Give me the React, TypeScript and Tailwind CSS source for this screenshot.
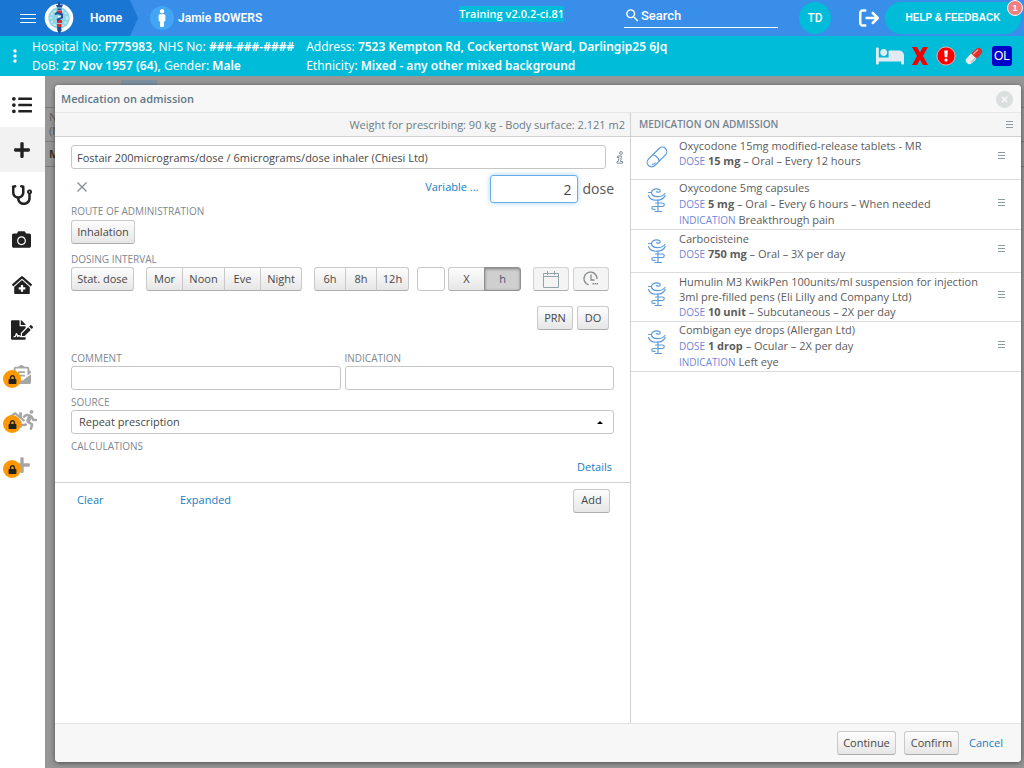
import React, { useState } from 'react';
import {
  FaBed,
  FaCamera,
  FaClinicMedical,
  FaEnvelopeOpenText,
  FaFileSignature,
  FaHome,
  FaListUl,
  FaLock,
  FaMale,
  FaPlus,
  FaRunning,
  FaStethoscope,
} from 'react-icons/fa';
import { FaArrowRightFromBracket, FaCircleXmark } from 'react-icons/fa6';
import { MdMoreVert, MdSearch } from 'react-icons/md';

type Medication = {
  name: string;
  dose: string;
  details: string;
  indication?: string;
  icon: 'pill' | 'bowl';
};

const medications: Medication[] = [
  {
    name: 'Oxycodone 15mg modified-release tablets - MR',
    dose: '15 mg',
    details: 'Oral – Every 12 hours',
    icon: 'pill',
  },
  {
    name: 'Oxycodone 5mg capsules',
    dose: '5 mg',
    details: 'Oral – Every 6 hours – When needed',
    indication: 'Breakthrough pain',
    icon: 'bowl',
  },
  { name: 'Carbocisteine', dose: '750 mg', details: 'Oral – 3X per day', icon: 'bowl' },
  {
    name: 'Humulin M3 KwikPen 100units/ml suspension for injection 3ml pre-filled pens (Eli Lilly and Company Ltd)',
    dose: '10 unit',
    details: 'Subcutaneous – 2X per day',
    icon: 'bowl',
  },
  {
    name: 'Combigan eye drops (Allergan Ltd)',
    dose: '1 drop',
    details: 'Ocular – 2X per day',
    indication: 'Left eye',
    icon: 'bowl',
  },
];

const buttonStyle =
  'h-6 whitespace-nowrap border border-[#c9c9c9] border-b-[#adadad] bg-linear-to-b from-[#fdfdfd] to-[#e6e6e6] text-[#474747]';
const inputStyle =
  'h-6 min-w-0 rounded-[3px] border border-[#c6c6c6] bg-white px-[5px] text-[#474747] outline-none';
const labelStyle = 'block text-[10px] leading-[14px] text-[#7d8792]';
const linkStyle = 'text-[#197dc1]';

function Logo() {
  return (
    <svg viewBox="0 0 30 32" className="h-8 w-[30px]">
      <circle cx="15" cy="16" r="12.5" fill="#8fd5e4" stroke="#fff" strokeWidth="3.6" />
      <circle cx="15" cy="16" r="8" fill="none" stroke="#d5f0f6" strokeWidth="1.5" strokeDasharray="2 2" />
      <path d="M12 3h2V0h2v2.500h3l-1 3h-5z" fill="#1d4f9c" />
      <path d="M13 24.500h4l.6 4-2.300 3.500-2-3.500z" fill="#1d4f9c" />
      <path d="M13 8.500h5V12h-5zM13 18h5v3h-5zM13 22h4.500v3H13z" fill="#e02b31" />
      <path
        d="M11 12.500l2-1.500 5 1.500v3l-5 2.500"
        fill="none"
        stroke="#1d4f9c"
        strokeWidth="2"
      />
      <path d="M13.500 6.500h4v1.500h-4z" fill="#1d4f9c" />
      <path d="M14 14h2.500v1.500H14z" fill="#fff" />
    </svg>
  );
}

function Capsule() {
  return (
    <svg viewBox="0 0 22 22" className="size-5">
      <g transform="rotate(-45 11 11)">
        <rect x="0" y="7" width="12" height="8" rx="4" fill="#ececec" />
        <rect x="10" y="7" width="12" height="8" rx="4" fill="#e22f2a" />
        <path d="M7 7h4v8H7z" fill="#ececec" />
        <path d="M11 7h4v8h-4z" fill="#e22f2a" />
        <path d="M12.500 9h6" stroke="#f6a19d" strokeWidth="1.500" strokeLinecap="round" />
        <path d="M3.500 13.700H11" stroke="#bfbfc4" strokeWidth="1.500" />
      </g>
    </svg>
  );
}

function PillIcon() {
  return (
    <svg viewBox="0 0 22 22" className="h-[22px] w-[22px]" fill="none" stroke="#5b9bdc" strokeWidth="1.200">
      <g transform="rotate(-45 11 11)">
        <rect x="-1" y="6.500" width="24" height="9" rx="4.500" />
        <path d="M9.500 6.500c2 2.500 2 6.500 0 9M2 12.800c1 1 2 1.200 4 1.200" />
      </g>
    </svg>
  );
}

function BowlIcon() {
  return (
    <svg
      viewBox="0 0 20 25"
      className="h-[25px] w-5"
      fill="none"
      stroke="#5b9bdc"
      strokeWidth="1.200"
      strokeLinecap="round"
    >
      <path d="M1.500 4.500h2.700c.8 2.800 3 4.300 6.300 4.200 3.500 0 6-1.200 7.500-3.200" />
      <path d="M4.300 4.500c.7-2 2.700-3.700 5.200-3.700 2.300 0 4 1 3.600 2.400-.4 1.200-2.300 1.300-3.600.5" />
      <path d="M1.500 7.500c1 3.200 4.200 5 8.500 4.700 4-.2 7-1.800 8.200-4.700M11 12.300v10.500M8 23.500h6.500" />
      <path d="M8.500 15h6.800c2.600 0 2.600 3.500 0 3.500H6.500c-2.300 0-2.300 2.900 0 2.900h1.500" />
    </svg>
  );
}

function RowMenu({ label }: { label: string }) {
  return (
    <button type="button" aria-label={label} className="flex h-4 w-3 items-center justify-center">
      <svg viewBox="0 0 7 9" className="h-[9px] w-[7px]">
        <path d="M0 1.500h7M0 4.500h7M0 7.500h7" stroke="#8b9da3" strokeWidth="1" />
      </svg>
    </button>
  );
}

function TopBar() {
  return (
    <header className="flex h-9 items-center bg-[#388ee8] text-xs font-semibold text-white">
      <div className="relative flex h-9 w-[130px] shrink-0 items-center bg-[#1976d2] pl-5">
        <button type="button" aria-label="Menu">
          <svg viewBox="0 0 16 11" className="h-[11px] w-4">
            <path d="M0 1.500h16M0 5.500h16M0 9.500h16" stroke="#fff" strokeWidth="1" />
          </svg>
        </button>
        <span className="ml-2 mr-4">
          <Logo />
        </span>
        <a href="#home" className="font-['Roboto']">
          Home
        </a>
        <svg viewBox="0 0 8 36" className="absolute left-full top-0 h-9 w-2">
          <path d="M0 0l8 18-8 18z" fill="#1976d2" />
        </svg>
      </div>
      <a href="#patient" className="ml-5 flex shrink-0 items-center gap-1">
        <span className="flex size-6 items-center justify-center rounded-full bg-[#42a5f5]">
          <FaMale size={18} />
        </span>
        <span className="font-['Roboto']">Jamie BOWERS</span>
      </a>
      <div className="flex-1" />
      <span className="mb-2 shrink-0 bg-[#00bcd8] text-[11px] leading-4">Training v2.0.2-ci.81</span>
      <label className="mb-2 ml-15 flex h-7 w-[154px] shrink-0 items-center border-b border-white pt-1">
        <MdSearch size={19} />
        <input
          type="text"
          aria-label="Search"
          placeholder="Search"
          className="w-full min-w-0 bg-transparent font-['Roboto'] text-[13px] font-medium outline-none placeholder:text-white"
        />
      </label>
      <button
        type="button"
        className="ml-[21px] size-8 shrink-0 rounded-full bg-[#00bcd8] font-['Roboto'] font-medium"
      >
        TD
      </button>
      <button type="button" aria-label="Sign out" className="ml-7 shrink-0">
        <FaArrowRightFromBracket size={20} />
      </button>
      <button
        type="button"
        className="relative ml-1.5 mr-[3px] h-8 w-[136px] shrink-0 rounded-full bg-[#00bcd8] font-['Liberation_Sans'] text-[10px] font-bold"
      >
        HELP &amp; FEEDBACK
        <span className="absolute -right-0.5 -top-0.5 flex size-4 items-center justify-center rounded-full border border-white bg-[#f08080] text-[9px]">
          1
        </span>
      </button>
    </header>
  );
}

function PatientBar() {
  return (
    <div className="flex h-10 items-center bg-[#00bcd8] font-['Noto_Sans',sans-serif] text-xs leading-[19px] text-white">
      <button type="button" aria-label="Patient options" className="flex w-8 shrink-0 pl-[5px]">
        <MdMoreVert size={20} />
      </button>
      <div className="mr-3 whitespace-nowrap">
        <p>
          Hospital No: <b className="font-semibold">F775983,</b> NHS No:{' '}
          <b className="font-semibold">###-###-####</b>
        </p>
        <p>
          DoB: <b className="font-semibold">27 Nov 1957 (64),</b> Gender: <b className="font-semibold">Male</b>
        </p>
      </div>
      <div className="flex-1 whitespace-nowrap">
        <p>
          Address: <b className="font-semibold">7523 Kempton Rd, Cockertonst Ward, Darlingip25 6Jq</b>
        </p>
        <p>
          Ethnicity: <b className="font-semibold">Mixed - any other mixed background</b>
        </p>
      </div>
      <div className="flex items-center gap-2 pr-3">
        <FaBed size={28} className="text-[#e2ebf2]" />
        <svg viewBox="0 0 16 18" className="h-[18px] w-4">
          <path d="M0 0h5l3 5.500L11 0h5l-5 9 5 9h-5l-3-5.500L5 18H0l5-9z" fill="#f00000" />
        </svg>
        <svg viewBox="0 0 22 22" className="size-5">
          <circle cx="11" cy="11" r="10" fill="#f00" stroke="#f7b5b5" strokeWidth="1" />
          <path d="M9 5h4l-.6 7.500H9.600z" fill="#fff" />
          <circle cx="11" cy="15.500" r="1.700" fill="#fff" />
        </svg>
        <Capsule />
        <span className="flex size-5 items-center justify-center rounded-[3px] bg-[#0000c8] font-['Liberation_Sans'] text-xs">
          OL
        </span>
      </div>
    </div>
  );
}

function LockBadge() {
  return (
    <span className="absolute left-[3px] top-[18px] flex size-[18px] items-center justify-center rounded-full bg-[#ff9800] text-[#212121]">
      <FaLock size={9} />
    </span>
  );
}

function Sidebar() {
  const item = 'relative flex h-[45px] w-full items-center justify-center pr-0.5 text-[#212121]';
  return (
    <nav className="w-[45px] shrink-0 bg-white pt-1.5">
      <button type="button" aria-label="List" className={item}>
        <FaListUl size={20} />
      </button>
      <button type="button" aria-label="Add" className={`${item} bg-[#f2f2f2]`}>
        <FaPlus size={18} />
      </button>
      <button type="button" aria-label="Examination" className={item}>
        <FaStethoscope size={20} />
      </button>
      <button type="button" aria-label="Photos" className={item}>
        <FaCamera size={19} />
      </button>
      <button type="button" aria-label="Clinic" className={item}>
        <FaClinicMedical size={20} />
      </button>
      <button type="button" aria-label="Sign" className={item}>
        <FaFileSignature size={22} />
      </button>
      <button type="button" aria-label="Letters, locked" className={item}>
        <FaEnvelopeOpenText size={19} className="text-[#a6a6a6]" />
        <LockBadge />
      </button>
      <button type="button" aria-label="Discharge, locked" className={item}>
        <span className="flex items-center text-[#a6a6a6]">
          <FaHome size={20} className="-mr-1.5" />
          <FaRunning size={20} />
        </span>
        <LockBadge />
      </button>
      <button type="button" aria-label="Add, locked" className={item}>
        <FaPlus size={18} className="text-[#a6a6a6]" />
        <LockBadge />
      </button>
    </nav>
  );
}

// page that stays dimmed behind the dialog
function Backdrop() {
  return (
    <div aria-hidden="true" className="absolute inset-0 overflow-hidden bg-[#969696] text-[11px] text-[#5c5c5c]">
      <div className="flex h-8 items-start border-b border-[#7a7a7a] pl-[76px] pt-1">
        <span className="h-5 w-9 bg-[#7c91a0]" />
      </div>
      <div className="h-[34px] overflow-hidden border-b border-[#7a7a7a] pl-1 pt-0.5 leading-[14px]">
        <p>N</p>
        <p>(N</p>
      </div>
      <div className="h-[25px] border-b border-[#7a7a7a] pl-1 font-bold leading-6 text-[#333]">M</div>
    </div>
  );
}

function PrescriptionForm() {
  const [dose, setDose] = useState('2');
  const [drug, setDrug] = useState('Fostair 200micrograms/dose / 6micrograms/dose inhaler (Chiesi Ltd)');
  const [unit, setUnit] = useState('h');

  return (
    <form>
      <div className="px-4 pb-1.5 pt-2">
        <div className="flex items-center gap-2">
          <input
            type="text"
            aria-label="Medication"
            value={drug}
            onChange={(e) => setDrug(e.target.value)}
            className={`${inputStyle} flex-1`}
          />
          <button type="button" aria-label="Information" className="-mr-3 flex w-3 justify-center">
            <svg viewBox="0 0 8 13" className="h-[13px] w-2" fill="none" stroke="#7f9198" strokeWidth="1">
              <circle cx="5" cy="2" r="1.400" />
              <path d="M1.500 5h4l-1 5.500H6.500v1.700H1v-1.700h1.200l.8-4H1.200z" />
            </svg>
          </button>
        </div>

        <div className="mt-1.5 flex items-center">
          <button type="button" aria-label="Remove" className="ml-1.5 mb-1">
            <svg viewBox="0 0 10 10" className="size-2.5">
              <path d="M.5.5l9 9M9.500.5l-9 9" stroke="#7c8b91" strokeWidth="1.200" />
            </svg>
          </button>
          <a href="#variable" className={`${linkStyle} ml-auto mb-1 mr-3`}>
            Variable ...
          </a>
          <input
            id="dose"
            type="text"
            value={dose}
            onChange={(e) => setDose(e.target.value)}
            className="h-7 w-[88px] rounded-[3px] border border-[#66afe9] px-1.5 text-right text-sm text-[#474747] shadow-[0_0_5px_rgba(102,175,233,0.6)] outline-none"
          />
          <label htmlFor="dose" className="ml-1 text-sm leading-4 text-[#555]">
            dose
          </label>
        </div>

        <p className={`${labelStyle} mt-px`}>ROUTE OF ADMINISTRATION</p>
        <button type="button" className={`${buttonStyle} mt-0.5 w-16 rounded-[3px] from-[#ededed]`}>
          Inhalation
        </button>

        <p className={`${labelStyle} mt-2`}>DOSING INTERVAL</p>
        <div className="mt-px flex">
          <button type="button" className={`${buttonStyle} mr-3 w-[63px] rounded-[3px]`}>
            Stat. dose
          </button>
          <button type="button" className={`${buttonStyle} w-[37px] rounded-l-[3px]`}>
            Mor
          </button>
          <button type="button" className={`${buttonStyle} -ml-px w-[43px]`}>
            Noon
          </button>
          <button type="button" className={`${buttonStyle} -ml-px w-[37px]`}>
            Eve
          </button>
          <button type="button" className={`${buttonStyle} -ml-px mr-3 w-[42px] rounded-r-[3px]`}>
            Night
          </button>
          <button type="button" className={`${buttonStyle} w-8 rounded-l-[3px]`}>
            6h
          </button>
          <button type="button" className={`${buttonStyle} -ml-px w-8`}>
            8h
          </button>
          <button type="button" className={`${buttonStyle} -ml-px mr-2 w-[33px] rounded-r-[3px]`}>
            12h
          </button>
          <input type="text" aria-label="Interval" className={`${inputStyle} mr-[3px] w-7`} />
          <button
            type="button"
            onClick={() => setUnit('X')}
            className={
              unit === 'X'
                ? 'h-6 w-[37px] rounded-l-[3px] border border-[#8f8f8f] bg-[#cfcfcf] text-[#3f5573] shadow-[inset_0_1px_3px_rgba(0,0,0,0.4)]'
                : `${buttonStyle} w-[37px] rounded-l-[3px]`
            }
          >
            X
          </button>
          <button
            type="button"
            onClick={() => setUnit('h')}
            className={
              unit === 'h'
                ? '-ml-px h-6 w-[37px] rounded-r-[3px] border border-[#8f8f8f] bg-[#cfcfcf] text-[#3f5573] shadow-[inset_0_1px_3px_rgba(0,0,0,0.4)]'
                : `${buttonStyle} -ml-px w-[37px] rounded-r-[3px]`
            }
          >
            h
          </button>
          <button
            type="button"
            aria-label="Dates"
            className="ml-auto mr-1 flex h-6 w-9 items-center justify-center rounded-[3px] border border-[#d2d2d2] border-b-[#adadad] bg-[#f4f4f4]"
          >
            <svg viewBox="0 0 16 17" className="h-[17px] w-4" fill="none" stroke="#92a3a9" strokeWidth="1">
              <path d="M.5 2.500h15v14H.5zM.5 5.500h15M4.500 0v4M11.500 0v4" />
            </svg>
          </button>
          <button
            type="button"
            aria-label="Times"
            className="mr-[5px] flex h-6 w-9 items-center justify-center rounded-[3px] border border-[#d2d2d2] border-b-[#adadad] bg-[#f4f4f4]"
          >
            <svg viewBox="0 0 16 16" className="size-4" fill="none" stroke="#85898b" strokeWidth="1.300">
              <path d="M5.500 13.800A6.500 6.500 0 1 1 14 8M8 3.500V9h3.500" />
              <path d="M9.500 12.700h5.500" strokeWidth="1.600" strokeDasharray="1.500 .6" />
            </svg>
          </button>
        </div>

        <div className="mr-[5px] mt-[15px] flex justify-end gap-1">
          <button type="button" className={`${buttonStyle} w-9 rounded-[3px]`}>
            PRN
          </button>
          <button type="button" className={`${buttonStyle} w-8 rounded-[3px]`}>
            DO
          </button>
        </div>

        <div className="mt-[21px] flex gap-1">
          <div className="flex-1">
            <label htmlFor="comment" className={labelStyle}>
              COMMENT
            </label>
            <input id="comment" type="text" className={`${inputStyle} mt-px w-full`} />
          </div>
          <div className="flex-1">
            <label htmlFor="indication" className={labelStyle}>
              INDICATION
            </label>
            <input id="indication" type="text" className={`${inputStyle} mt-px w-full`} />
          </div>
        </div>

        <label htmlFor="source" className={`${labelStyle} mt-[5px]`}>
          SOURCE
        </label>
        <div className="relative mt-px">
          <select id="source" className={`${inputStyle} block w-full appearance-none pl-[7px] text-[#222]`}>
            <option>Repeat prescription</option>
          </select>
          <svg viewBox="0 0 6 3" className="pointer-events-none absolute right-[11px] top-[11px] h-[3px] w-1.5">
            <path d="M0 3L3 0l3 3z" fill="#000" />
          </svg>
        </div>

        <p className={`${labelStyle} mt-[5px]`}>CALCULATIONS</p>
        <div className="mt-1.5 pr-0.5 text-right">
          <a href="#details" className={linkStyle}>
            Details
          </a>
        </div>
      </div>

      <div className="flex items-center border-t border-[#d0d0d0] pl-[22px] pr-5 pt-1.5">
        <a href="#clear" className={`${linkStyle} w-[103px]`}>
          Clear
        </a>
        <a href="#expanded" className={linkStyle}>
          Expanded
        </a>
        <button type="button" className={`${buttonStyle} ml-auto w-[37px] rounded-[3px]`}>
          Add
        </button>
      </div>
    </form>
  );
}

function MedicationRow({ med }: { med: Medication }) {
  return (
    <li
      className={`flex min-h-[43px] border-b border-[#dcdcdc] pr-3.5 ${
        med.indication ? 'pb-px leading-4' : 'pb-0.5 pt-px leading-[15px]'
      }`}
    >
      <span className="flex w-12 shrink-0 justify-center pl-1 pt-2">
        {med.icon === 'pill' ? <PillIcon /> : <BowlIcon />}
      </span>
      <div className="flex-1 text-[#5c5c5c]">
        <p>{med.name}</p>
        <p>
          <span className="text-[10px] leading-none text-[#6f86d6]">DOSE</span> <b>{med.dose}</b> – {med.details}
        </p>
        {med.indication && (
          <p>
            <span className="text-[10px] leading-none text-[#6f86d6]">INDICATION</span> {med.indication}
          </p>
        )}
      </div>
      <div className="flex items-center pb-1">
        <RowMenu label={`Options for ${med.name}`} />
      </div>
    </li>
  );
}

export default function App() {
  return (
    <div className="flex min-h-screen flex-col overflow-x-hidden font-['Open_Sans',sans-serif] text-[11px]">
      <TopBar />
      <PatientBar />
      <div className="flex flex-1">
        <Sidebar />
        <main className="relative flex min-w-0 flex-1 pb-1.5 pl-2.5 pr-[3px] pt-[9px]">
          <Backdrop />
          <section
            role="dialog"
            aria-label="Medication on admission"
            className="relative flex min-w-0 flex-1 flex-col overflow-hidden rounded-[4px] bg-white shadow-[0_1px_5px_rgba(0,0,0,0.5)]"
          >
            <div className="flex h-7 items-center justify-between border-b border-[#e6e6e6] bg-[#f7f7f7] pl-1.5 pr-2 pt-0.5">
              <h1 className="font-semibold text-[#5f7886]">Medication on admission</h1>
              <button type="button" aria-label="Close">
                <FaCircleXmark size={17} className="text-[#dcdfdf]" />
              </button>
            </div>
            <div className="flex flex-1">
              <div className="min-w-0 flex-1 border-r border-[#d0d0d0]">
                <div className="h-6 border-b border-[#d0d0d0] bg-[#f5f5f5] pr-[5px] text-right leading-[23px] text-[#6b7c85]">
                  Weight for prescribing: 90 kg - Body surface: 2.121 m2
                </div>
                <PrescriptionForm />
              </div>
              <div className="w-[390px] shrink-0">
                <div className="flex h-6 items-center justify-between border-b border-[#d0d0d0] bg-[#f5f5f5] pl-2 pr-1.5">
                  <h2 className="text-[10px] font-semibold text-[#758390]">MEDICATION ON ADMISSION</h2>
                  <RowMenu label="List options" />
                </div>
                <ul>
                  {medications.map((med) => (
                    <MedicationRow key={med.name} med={med} />
                  ))}
                </ul>
              </div>
            </div>
            <div className="flex h-[39px] items-center justify-end gap-2 border-t border-[#e2e2e2] bg-[#f7f7f7] pr-[18px]">
              <button type="button" className={`${buttonStyle} w-[59px] rounded-[3px]`}>
                Continue
              </button>
              <button type="button" className={`${buttonStyle} w-[55px] rounded-[3px]`}>
                Confirm
              </button>
              <button type="button" className={`${linkStyle} ml-0.5`}>
                Cancel
              </button>
            </div>
          </section>
        </main>
      </div>
    </div>
  );
}
